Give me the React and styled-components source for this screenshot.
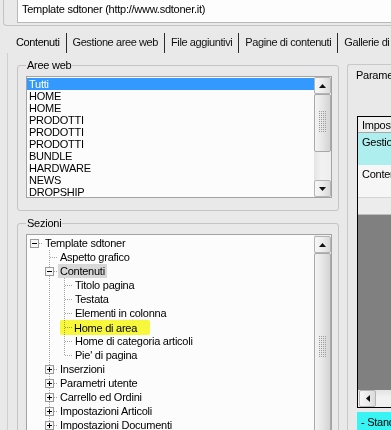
import React from "react";
import styled, { createGlobalStyle } from "styled-components";

const GlobalStyle = createGlobalStyle`
  html, body {
    margin: 0;
    padding: 0;
    background: #e9e9e9;
  }
  body {
    font-family: "Liberation Sans", Arial, sans-serif;
    font-size: 11px;
    letter-spacing: -0.25px;
    color: #000;
  }
`;

const Page = styled.div`
  width: 391px;
  height: 430px;
  overflow: hidden;
  background: #e9e9e9;
`;

/* ---------- top address bar ---------- */

const TopPanel = styled.div`
  margin-left: 3px;
  height: 25px;
  border-left: 1px solid #c3c3c3;
  border-bottom: 1px solid #c3c3c3;
  border-bottom-left-radius: 4px;
  padding-left: 13px;
`;

const AddressBox = styled.div`
  box-sizing: border-box;
  height: 23px;
  background: #fdfdfd;
  border-left: 1px solid #b9b9b9;
  border-bottom: 1px solid #b9b9b9;
  padding: 2px 4px 0;
  line-height: 14px;
  white-space: nowrap;
`;

/* ---------- tabs ---------- */

const TabStrip = styled.div`
  display: flex;
  margin-top: 7px;
  padding-left: 10px;
  white-space: nowrap;
`;

const Tab = styled.div`
  height: 20px;
  line-height: 19px;
  padding: 0 6px;
  letter-spacing: -0.4px;
  border-right: 1px solid #2a2a2a;
  flex-shrink: 0;
  color: ${(p) => (p.$active ? "#000" : "#111")};
`;

const TabPage = styled.div`
  margin-left: 7px;
  border-left: 1px solid #d0d0d0;
  padding: 5px 0 0 9px;
  display: grid;
  grid-template-columns: 322px 220px;
  column-gap: 8px;
  align-items: start;
`;

/* ---------- group boxes ---------- */

const LeftColumn = styled.div`
  display: flex;
  flex-direction: column;
  gap: 5px;
`;

const Group = styled.fieldset`
  margin: 0;
  min-width: 0;
  padding: 4px 6px ${(p) => p.$bottom}px 8px;
  border: 1px solid #c4c4c4;
  border-radius: 3px;
`;

const Legend = styled.legend`
  padding: 0 1px;
  line-height: 14px;
`;

const ListFrame = styled.div`
  display: flex;
  height: ${(p) => p.$h}px;
  background: #fcfcfc;
  border: 1px solid #a3a3a3;
  overflow: hidden;
`;

const Items = styled.div`
  flex: 1;
  min-width: 0;
  padding-top: 1px;
  overflow: hidden;
`;

const ListItem = styled.div`
  height: 12px;
  line-height: 12px;
  padding-left: 2px;
  background: ${(p) => (p.$selected ? "#3399ff" : "transparent")};
  color: ${(p) => (p.$selected ? "#fff" : "#000")};
`;

/* ---------- scrollbars ---------- */

const VScroll = styled.div`
  width: 17px;
  flex-shrink: 0;
  display: flex;
  flex-direction: column;
  padding-top: ${(p) => p.$offset || 0}px;
  background: linear-gradient(to right, #e4e4e4, #f2f2f2 45%, #eeeeee);
`;

const ScrollButton = styled.div`
  box-sizing: border-box;
  width: 17px;
  height: 17px;
  flex-shrink: 0;
  display: flex;
  align-items: center;
  justify-content: center;
  border: 1px solid #b4b4b4;
  border-radius: 2px;
  background: linear-gradient(to right, #f7f7f7, #ececec 50%, #d9d9d9);
`;

const Thumb = styled.div`
  box-sizing: border-box;
  height: ${(p) => p.$h}px;
  min-height: ${(p) => p.$h}px;
  flex-shrink: 0;
  display: flex;
  flex-direction: column;
  align-items: center;
  padding-top: ${(p) => p.$grip}px;
  border: 1px solid #a9a9a9;
  border-radius: 2px;
  background: linear-gradient(to right, #f4f4f4, #e6e6e6 50%, #d3d3d3);
`;

const Track = styled.div`
  flex: 1;
`;

const HScroll = styled.div`
  height: 17px;
  flex-shrink: 0;
  display: flex;
  padding-left: 1px;
  background: linear-gradient(to bottom, #e4e4e4, #f2f2f2 45%, #eeeeee);
`;

const Arrow = ({ dir }) => {
  const d = {
    up: "M3.5 0 L7 4 L0 4 Z",
    down: "M0 0 L7 0 L3.5 4 Z",
    left: "M4 0 L4 7 L0 3.5 Z",
  }[dir];
  const horiz = dir === "left";
  return (
    <svg width={horiz ? 4 : 7} height={horiz ? 7 : 4} viewBox={horiz ? "0 0 4 7" : "0 0 7 4"}>
      <path d={d} fill="#111" />
    </svg>
  );
};

const Grip = () => {
  const dots = [];
  for (let c = 0; c < 4; c++) {
    for (let r = 0; r < 11; r++) {
      dots.push(<rect key={`${c}-${r}`} x={c * 2} y={r * 2} width="1" height="1" fill="#9c9c9c" />);
    }
  }
  return (
    <svg width="8" height="22" viewBox="0 0 8 22" style={{ display: "block", flexShrink: 0 }}>
      {dots}
    </svg>
  );
};

/* ---------- tree ---------- */

const TreeRow = styled.div`
  display: flex;
  align-items: center;
  height: 14px;
  white-space: nowrap;
`;

const GuideSvg = styled.svg`
  flex-shrink: 0;
  display: block;
`;

const NodeLabel = styled.span`
  line-height: 14px;
  margin-left: ${(p) => (p.$marker ? -12 : 1)}px;
  padding: ${(p) => (p.$marker ? "1px 13px 0 14px" : "0 2px")};
  background: ${(p) =>
    p.$marker ? "#fafa3c" : p.$inactive ? "#d8d8d8" : "transparent"};
  mix-blend-mode: ${(p) => (p.$marker ? "multiply" : "normal")};
  border-radius: ${(p) => (p.$marker ? "2px" : "0")};
`;

const Guide = ({ kind, expander, open, last, root }) => (
  <GuideSvg width="15" height="14" viewBox="0 0 15 14">
    <g stroke="#a3a3a3" strokeWidth="1" strokeDasharray="1 1" fill="none">
      {kind === "pipe" && <line x1="7.5" y1="0" x2="7.5" y2="14" />}
      {kind === "node" && !root && <line x1="7.5" y1="0" x2="7.5" y2={last ? 7.5 : 14} />}
      {kind === "node" && <line x1={expander ? 12 : 8} y1="7.5" x2="15" y2="7.5" />}
    </g>
    {kind === "node" && expander && (
      <g>
        <rect x="3.5" y="3.5" width="8" height="8" fill="#f6f6f6" stroke="#9a9a9a" />
        <line x1="5" y1="7.5" x2="10" y2="7.5" stroke="#000" />
        {!open && <line x1="7.5" y1="5" x2="7.5" y2="10" stroke="#000" />}
      </g>
    )}
  </GuideSvg>
);

/* ---------- parameters panel ---------- */

const ParamPanel = styled.div`
  margin-top: 6px;
  height: 400px;
  border-top: 1px solid #c8c8c8;
  border-left: 1px solid #c8c8c8;
  border-top-left-radius: 3px;
  padding: 3px 0 0 9px;
  display: flex;
  flex-direction: column;
`;

const PanelTitle = styled.div`
  line-height: 14px;
  margin-left: -1px;
  white-space: nowrap;
`;

const DataGrid = styled.div`
  margin-top: 34px;
  height: 290px;
  border: 1px solid #000;
  display: flex;
  flex-direction: column;
  background: #808080;
`;

const GridRow = styled.div`
  box-sizing: border-box;
  height: ${(p) => p.$h}px;
  flex-shrink: 0;
  padding: ${(p) => p.$pt}px 4px 0;
  line-height: 14px;
  white-space: nowrap;
  background: ${(p) => p.$bg};
  border-bottom: 1px solid ${(p) => p.$line || p.$bg};
`;

const Filler = styled.div`
  flex: 1;
`;

const StatusBar = styled.div`
  margin-top: 4px;
  height: 30px;
  background: #3af4f4;
  padding: 3px 4px 0;
  line-height: 14px;
  white-space: nowrap;
`;

const areeWeb = [
  "Tutti",
  "HOME",
  "HOME",
  "PRODOTTI",
  "PRODOTTI",
  "PRODOTTI",
  "BUNDLE",
  "HARDWARE",
  "NEWS",
  "DROPSHIP",
  "OFFERTE",
  "CONTATTI",
];

const tabs = [
  "Contenuti",
  "Gestione aree web",
  "File aggiuntivi",
  "Pagine di contenuti",
  "Gallerie di immagini",
];

const sections = [
  { label: "Template sdtoner", level: 0, expander: true, open: true },
  { label: "Aspetto grafico", level: 1 },
  { label: "Contenuti", level: 1, expander: true, open: true, inactive: true },
  { label: "Titolo pagina", level: 2 },
  { label: "Testata", level: 2 },
  { label: "Elementi in colonna", level: 2 },
  { label: "Home di area", level: 2, marker: true },
  { label: "Home di categoria articoli", level: 2 },
  { label: "Pie' di pagina", level: 2, last: true },
  { label: "Inserzioni", level: 1, expander: true },
  { label: "Parametri utente", level: 1, expander: true },
  { label: "Carrello ed Ordini", level: 1, expander: true },
  { label: "Impostazioni Articoli", level: 1, expander: true },
  { label: "Impostazioni Documenti", level: 1, expander: true },
  { label: "Spedizioni", level: 1, expander: true },
];

function SectionRow({ node }) {
  const guides = [];
  for (let i = 0; i <= node.level; i++) {
    if (i === node.level) {
      guides.push(
        <Guide
          key={i}
          kind="node"
          expander={node.expander}
          open={node.open}
          last={node.last}
          root={node.level === 0}
        />
      );
    } else if (i === 1) {
      guides.push(<Guide key={i} kind="pipe" />);
    } else {
      guides.push(<Guide key={i} kind="empty" />);
    }
  }
  return (
    <TreeRow>
      {guides}
      <NodeLabel $inactive={node.inactive} $marker={node.marker}>
        {node.label}
      </NodeLabel>
    </TreeRow>
  );
}

export default function App() {
  return (
    <Page>
      <GlobalStyle />
      <TopPanel>
        <AddressBox>Template sdtoner (http://www.sdtoner.it)</AddressBox>
      </TopPanel>

      <TabStrip>
        {tabs.map((t, i) => (
          <Tab key={t} $active={i === 0}>
            {t}
          </Tab>
        ))}
      </TabStrip>

      <TabPage>
        <LeftColumn>
          <Group $bottom={12}>
            <Legend>Aree web</Legend>
            <ListFrame $h={120}>
              <Items>
                {areeWeb.map((a, i) => (
                  <ListItem key={i} $selected={i === 0}>
                    {a}
                  </ListItem>
                ))}
              </Items>
              <VScroll>
                <ScrollButton>
                  <Arrow dir="up" />
                </ScrollButton>
                <Thumb $h={58} $grip={16}>
                  <Grip />
                </Thumb>
                <Track />
                <ScrollButton>
                  <Arrow dir="down" />
                </ScrollButton>
              </VScroll>
            </ListFrame>
          </Group>

          <Group $bottom={12}>
            <Legend>Sezioni</Legend>
            <ListFrame $h={230}>
              <Items>
                {sections.map((n, i) => (
                  <SectionRow key={i} node={n} />
                ))}
              </Items>
              <VScroll $offset={1}>
                <ScrollButton>
                  <Arrow dir="up" />
                </ScrollButton>
                <Thumb $h={190} $grip={82}>
                  <Grip />
                </Thumb>
                <Track />
              </VScroll>
            </ListFrame>
          </Group>
        </LeftColumn>

        <ParamPanel>
          <PanelTitle>Parametri</PanelTitle>
          <DataGrid>
            <GridRow $h={16} $pt={1} $bg="#f0f0f0" $line="#a8a8a8">
              Impostazione
            </GridRow>
            <GridRow $h={32} $pt={2} $bg="#aeeeee">
              Gestione aree web
            </GridRow>
            <GridRow $h={33} $pt={2} $bg="#f6f6f6" $line="#d4d4d4">
              Contenuti
            </GridRow>
            <GridRow $h={17} $pt={0} $bg="#ececec" $line="#bdbdbd" />
            <Filler />
            <HScroll>
              <ScrollButton>
                <Arrow dir="left" />
              </ScrollButton>
            </HScroll>
          </DataGrid>
          <StatusBar>- Standard</StatusBar>
        </ParamPanel>
      </TabPage>
    </Page>
  );
}
